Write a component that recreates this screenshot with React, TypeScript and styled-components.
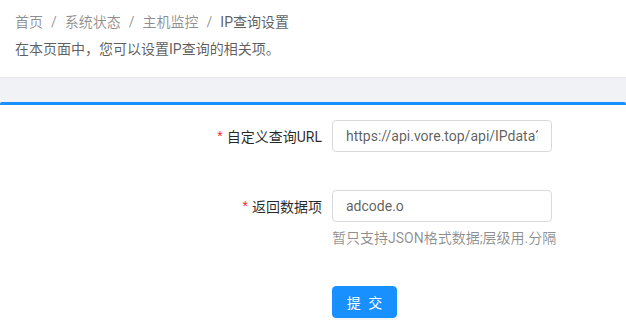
import React from "react";
import styled, { createGlobalStyle } from "styled-components";

const GlobalStyle = createGlobalStyle`
  html, body { margin: 0; padding: 0; background: #f0f2f5; }
  body {
    font-family: Roboto, "Noto Sans CJK SC", "Helvetica Neue", Arial, sans-serif;
    font-size: 14px;
    color: rgba(0,0,0,0.65);
  }
  * { box-sizing: border-box; }
`;

const Page = styled.div`
  width: 626px;
  height: 330px;
  overflow: hidden;
  display: flex;
  flex-direction: column;
  background: #f0f2f5;
`;

const Header = styled.div`
  background: #fff;
  padding: 11px 15px 0;
  height: 78px;
  border-bottom: 1px solid #e8e8e8;
`;

const Breadcrumb = styled.div`
  display: flex;
  align-items: center;
  line-height: 22px;
  height: 22px;
`;

const Crumb = styled.span<{ $current?: boolean }>`
  color: ${(p) => (p.$current ? "rgba(0,0,0,0.65)" : "rgba(0,0,0,0.45)")};
`;

const Sep = styled.span`
  margin: 0 8px;
  color: rgba(0,0,0,0.45);
`;

const Desc = styled.div`
  margin-top: 5px;
  line-height: 22px;
  color: rgba(0,0,0,0.65);
`;

const Body = styled.div`
  padding-top: 24px;
  flex: 1;
  display: flex;
  flex-direction: column;
`;

const Card = styled.div`
  flex: 1;
  background: #fff;
  border-top: 3px solid #1890ff;
  border-radius: 2px 2px 0 0;
  padding-top: 15px;
`;

const Form = styled.div`
  display: grid;
  grid-template-columns: 332px 220px;
  row-gap: 0;
`;

const Label = styled.label`
  height: 32px;
  display: flex;
  align-items: center;
  justify-content: flex-end;
  padding-right: 10px;
  color: rgba(0,0,0,0.85);
  font-size: 14px;
`;

const Star = styled.span`
  color: #f5222d;
  margin-right: 4px;
  font-family: SimSun, "Liberation Sans", sans-serif;
`;

const Field = styled.div<{ $mb: number }>`
  margin-bottom: ${(p) => p.$mb}px;
`;

const Input = styled.input`
  width: 220px;
  height: 32px;
  padding: 0 13px;
  border: 1px solid #d9d9d9;
  border-radius: 4px;
  font-family: Roboto, "Noto Sans CJK SC", sans-serif;
  font-size: 14px;
  color: rgba(0,0,0,0.65);
  outline: none;
  background: #fff;
`;

const Help = styled.div`
  margin-top: 5px;
  line-height: 22px;
  color: rgba(0,0,0,0.45);
  font-size: 14px;
  white-space: nowrap;
`;

const Button = styled.button`
  width: 65px;
  height: 32px;
  border: 1px solid #1890ff;
  background: #1890ff;
  color: #fff;
  border-radius: 4px;
  font-family: Roboto, "Noto Sans CJK SC", sans-serif;
  font-size: 14px;
  letter-spacing: 2px;
  padding: 0 0 0 2px;
  box-shadow: 0 2px 0 rgba(0,0,0,0.045);
  cursor: pointer;
`;

const Empty = styled.div``;

export default function App() {
  return (
    <>
      <GlobalStyle />
      <Page>
        <Header>
          <Breadcrumb>
            <Crumb>首页</Crumb>
            <Sep>/</Sep>
            <Crumb>系统状态</Crumb>
            <Sep>/</Sep>
            <Crumb>主机监控</Crumb>
            <Sep>/</Sep>
            <Crumb $current>IP查询设置</Crumb>
          </Breadcrumb>
          <Desc>在本页面中，您可以设置IP查询的相关项。</Desc>
        </Header>
        <Body>
          <Card>
            <Form>
              <Label>
                <Star>*</Star>自定义查询URL
              </Label>
              <Field $mb={38}>
                <Input defaultValue="https://api.vore.top/api/IPdata?ip=" readOnly />
              </Field>
              <Label>
                <Star>*</Star>返回数据项
              </Label>
              <Field $mb={37}>
                <Input defaultValue="adcode.o" readOnly />
                <Help>暂只支持JSON格式数据;层级用.分隔</Help>
              </Field>
              <Empty />
              <Field $mb={0}>
                <Button>提 交</Button>
              </Field>
            </Form>
          </Card>
        </Body>
      </Page>
    </>
  );
}
